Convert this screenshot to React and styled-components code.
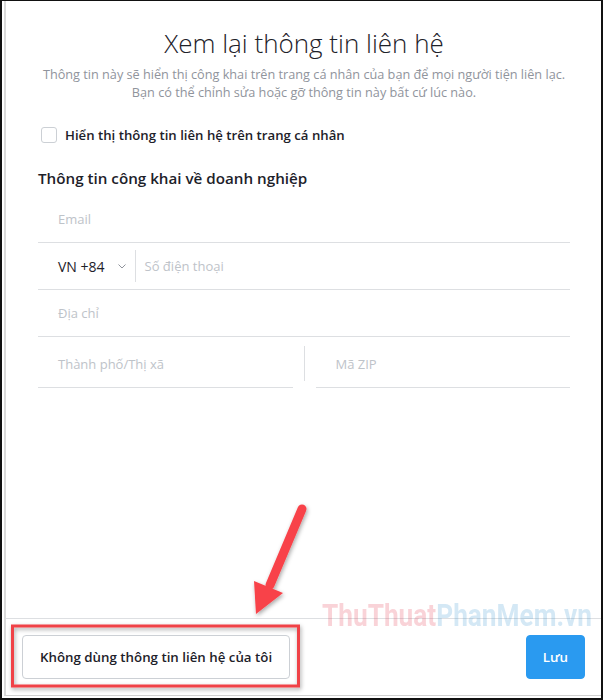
import React from "react";
import styled, { createGlobalStyle } from "styled-components";

const GlobalStyle = createGlobalStyle`
  body {
    margin: 0;
    background: #ffffff;
    font-family: "Open Sans", "Noto Sans", sans-serif;
  }
`;

const Frame = styled.div`
  position: relative;
  width: 603px;
  height: 700px;
  box-sizing: border-box;
  border-top: 1px solid #111;
  border-left: 2px solid #111;
  border-right: 2px solid #111;
  border-bottom: 2px solid #111;
  padding: 0 0 2px 2px;
  background: #fff;
  display: flex;
`;

const Dialog = styled.div`
  flex: 1;
  display: flex;
  flex-direction: column;
  border-left: 2px solid #dadada;
  border-bottom: 1px solid #d0d0d0;
`;

const Body = styled.div`
  flex: 1;
  padding: 0 31px 0 32px;
`;

const Title = styled.h1`
  margin: 22px 0 0;
  text-align: center;
  font-weight: 300;
  font-size: 26px;
  line-height: 40px;
  color: #1d2129;
`;

const Subtitle = styled.p`
  margin: 2px 0 0;
  text-align: center;
  font-size: 12.7px;
  line-height: 18px;
  color: #90949c;
`;

const CheckRow = styled.label`
  display: flex;
  align-items: center;
  gap: 8px;
  margin: 25px 0 0 3px;
  font-size: 13.2px;
  font-weight: 600;
  color: #1d2129;
`;

const Box = styled.span`
  width: 14px;
  height: 14px;
  border: 1px solid #ccd0d5;
  border-radius: 3px;
  background: #fff;
`;

const SectionTitle = styled.h2`
  margin: 23px 0 0;
  font-size: 15.2px;
  font-weight: 600;
  line-height: 22px;
  color: #1d2129;
`;

const Field = styled.div`
  height: 46px;
  display: flex;
  align-items: center;
  border-bottom: 1px solid #dddfe2;
  padding-left: 20px;
  font-size: 13px;
  color: #bec3c9;
`;

const Fields = styled.div`
  margin-top: 7px;
`;

const Country = styled.span`
  display: flex;
  align-items: center;
  gap: 13px;
  font-size: 14px;
  color: #1d2129;
  padding-right: 9px;
`;

const VLine = styled.span`
  width: 1px;
  height: 32px;
  background: #dddfe2;
  margin-right: 9px;
`;

const SplitRow = styled.div`
  display: grid;
  grid-template-columns: 1fr 1px 1fr;
  column-gap: 11px;
  margin-top: 4px;
`;

const Divider = styled.span`
  width: 1px;
  height: 35px;
  margin-top: 5px;
  background: #dddfe2;
`;

const Footer = styled.div`
  border-top: 1px solid #dddfe2;
  height: 77px;
  box-sizing: border-box;
  padding: 16px 16px 0 16px;
  display: flex;
  justify-content: space-between;
  align-items: flex-start;
`;

const Button = styled.button`
  height: 44px;
  box-sizing: border-box;
  padding: 0 ${(p) => (p.$primary ? 16 : 17)}px;
  border-radius: 4px;
  border: 1px solid ${(p) => (p.$primary ? "#2a9af0" : "#ccd0d5")};
  background: ${(p) => (p.$primary ? "#2a9af0" : "#ffffff")};
  color: ${(p) => (p.$primary ? "#ffffff" : "#1d2129")};
  font-family: "Open Sans", "Noto Sans", sans-serif;
  font-size: 13.3px;
  font-weight: 600;
`;

const Watermark = styled.div`
  position: absolute;
  left: 320px;
  top: 596px;
  font-family: Roboto, "Liberation Sans", sans-serif;
  font-weight: 700;
  font-size: 32px;
  line-height: 36px;
  transform: scaleX(0.82);
  transform-origin: left top;
  white-space: nowrap;
  pointer-events: none;
`;

const Red = styled.span`
  color: rgba(230, 70, 90, 0.24);
`;

const Blue = styled.span`
  color: rgba(60, 150, 210, 0.22);
`;

const Overlay = styled.svg`
  position: absolute;
  left: -2px;
  top: -1px;
  width: 603px;
  height: 700px;
  pointer-events: none;
`;

const Annotation = () => (
  <Overlay viewBox="0 0 603 700">
    <defs>
      <filter id="sh" x="-20%" y="-20%" width="140%" height="140%">
        <feDropShadow dx="1" dy="2" stdDeviation="2" floodColor="#000" floodOpacity="0.35" />
      </filter>
    </defs>
    <rect x="12.5" y="626" width="286" height="60" fill="none" stroke="#f04347" strokeWidth="3" filter="url(#sh)" />
    <g filter="url(#sh)" fill="#f8434a">
      <line x1="302" y1="509" x2="270" y2="585" stroke="#f8434a" strokeWidth="9" strokeLinecap="round" />
      <polygon points="254,581 283,593 256,614" />
    </g>
  </Overlay>
);

const Chevron = () => (
  <svg width="8" height="5" viewBox="0 0 8 5">
    <path d="M0.5 0.5 L4 4 L7.5 0.5" fill="none" stroke="#90949c" strokeWidth="1" />
  </svg>
);

export default function App() {
  return (
    <>
      <GlobalStyle />
      <Frame>
        <Dialog>
          <Body>
            <Title>Xem lại thông tin liên hệ</Title>
            <Subtitle>
              Thông tin này sẽ hiển thị công khai trên trang cá nhân của bạn để mọi người tiện liên lạc.
              <br />
              Bạn có thể chỉnh sửa hoặc gỡ thông tin này bất cứ lúc nào.
            </Subtitle>
            <CheckRow>
              <Box />
              Hiển thị thông tin liên hệ trên trang cá nhân
            </CheckRow>
            <SectionTitle>Thông tin công khai về doanh nghiệp</SectionTitle>
            <Fields>
              <Field>Email</Field>
              <Field>
                <Country>
                  VN +84 <Chevron />
                </Country>
                <VLine />
                Số điện thoại
              </Field>
              <Field>Địa chỉ</Field>
              <SplitRow>
                <Field>Thành phố/Thị xã</Field>
                <Divider />
                <Field>Mã ZIP</Field>
              </SplitRow>
            </Fields>
          </Body>
          <Footer>
            <Button>Không dùng thông tin liên hệ của tôi</Button>
            <Button $primary>Lưu</Button>
          </Footer>
        </Dialog>
        <Watermark>
          <Red>ThuThuat</Red>
          <Blue>PhanMem.vn</Blue>
        </Watermark>
        <Annotation />
      </Frame>
    </>
  );
}
